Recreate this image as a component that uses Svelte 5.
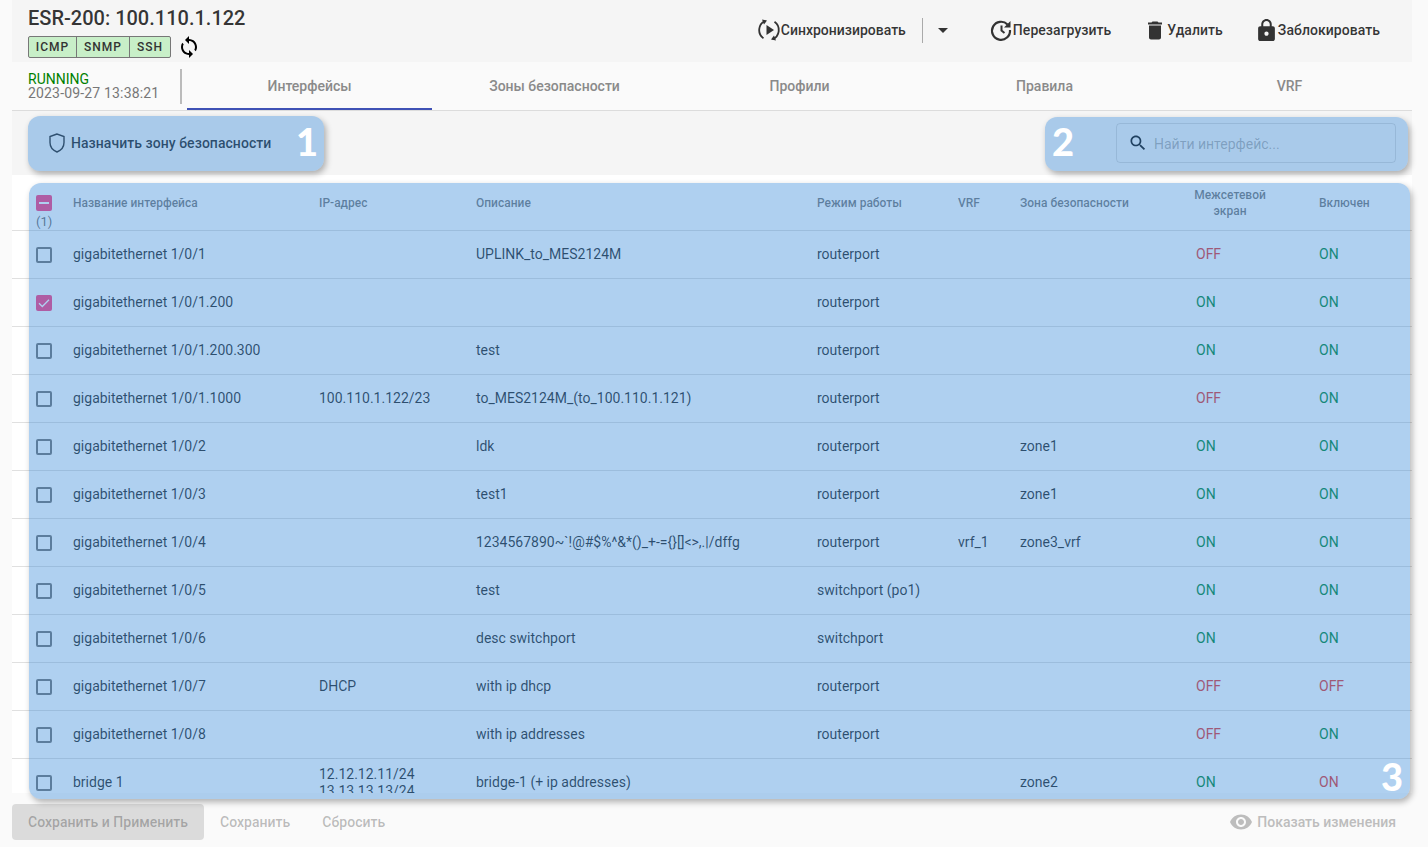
<script>
  const rows = [
    { name: 'gigabitethernet 1/0/1', ip: '', desc: 'UPLINK_to_MES2124M', mode: 'routerport', vrf: '', zone: '', fw: 'OFF', en: 'ON' },
    { name: 'gigabitethernet 1/0/1.200', ip: '', desc: '', mode: 'routerport', vrf: '', zone: '', fw: 'ON', en: 'ON', checked: true },
    { name: 'gigabitethernet 1/0/1.200.300', ip: '', desc: 'test', mode: 'routerport', vrf: '', zone: '', fw: 'ON', en: 'ON' },
    { name: 'gigabitethernet 1/0/1.1000', ip: '100.110.1.122/23', desc: 'to_MES2124M_(to_100.110.1.121)', mode: 'routerport', vrf: '', zone: '', fw: 'OFF', en: 'ON' },
    { name: 'gigabitethernet 1/0/2', ip: '', desc: 'ldk', mode: 'routerport', vrf: '', zone: 'zone1', fw: 'ON', en: 'ON' },
    { name: 'gigabitethernet 1/0/3', ip: '', desc: 'test1', mode: 'routerport', vrf: '', zone: 'zone1', fw: 'ON', en: 'ON' },
    { name: 'gigabitethernet 1/0/4', ip: '', desc: '1234567890~`!@#$%^&*()_+-={}[]<>,.|/dffg', mode: 'routerport', vrf: 'vrf_1', zone: 'zone3_vrf', fw: 'ON', en: 'ON' },
    { name: 'gigabitethernet 1/0/5', ip: '', desc: 'test', mode: 'switchport (po1)', vrf: '', zone: '', fw: 'ON', en: 'ON' },
    { name: 'gigabitethernet 1/0/6', ip: '', desc: 'desc switchport', mode: 'switchport', vrf: '', zone: '', fw: 'ON', en: 'ON' },
    { name: 'gigabitethernet 1/0/7', ip: 'DHCP', desc: 'with ip dhcp', mode: 'routerport', vrf: '', zone: '', fw: 'OFF', en: 'OFF' },
    { name: 'gigabitethernet 1/0/8', ip: '', desc: 'with ip addresses', mode: 'routerport', vrf: '', zone: '', fw: 'OFF', en: 'ON' },
    { name: 'bridge 1', ip: '12.12.12.11/24\n13.13.13.13/24', desc: 'bridge-1 (+ ip addresses)', mode: '', vrf: '', zone: 'zone2', fw: 'ON', en: 'ON', enBad: true }
  ];
  const tabs = ['Интерфейсы', 'Зоны безопасности', 'Профили', 'Правила', 'VRF'];
</script>

<div class="page">
  <header class="header">
    <div class="identity">
      <h1>ESR-200: 100.110.1.122</h1>
      <div class="badge-line">
        <div class="badges"><span class="b1">ICMP</span><span class="b2">SNMP</span><span class="b3">SSH</span></div>
        <svg class="refresh" viewBox="0 0 24 24" width="24" height="24"><path d="M12 4V1L8 5l4 4V6c3.31 0 6 2.69 6 6 0 1.01-.25 1.97-.7 2.8l1.46 1.46C19.54 15.03 20 13.57 20 12c0-4.42-3.58-8-8-8zm0 14c-3.31 0-6-2.69-6-6 0-1.01.25-1.97.7-2.8L5.24 7.74C4.46 8.97 4 10.43 4 12c0 4.42 3.58 8 8 8v3l4-4-4-4v3z"/></svg>
      </div>
    </div>
    <div class="actions">
      <div class="action a-sync">
        <svg viewBox="0 0 24 24" width="24" height="24" fill="none" stroke="#333" stroke-width="1.800">
          <path d="M8.500 2.800A10 10 0 0 0 6.500 20.300"/><path d="M15.500 21.200A10 10 0 0 0 17.500 3.700"/>
          <path d="M5 1.500 10 2.500 7 6.500z" fill="#333" stroke="none"/><path d="M19 22.500 14 21.500 17 17.500z" fill="#333" stroke="none"/>
          <path d="M9.500 7v10l7.500-5z" fill="#333" stroke="none"/>
        </svg>
        <span>Синхронизировать</span>
      </div>
      <i class="sep"></i>
      <i class="caret"></i>
      <div class="action a-restart">
        <svg viewBox="0 0 24 24" width="24" height="24" fill="none" stroke="#333" stroke-width="2.200">
          <path d="M18.500 6.500A9 9 0 1 0 21 12"/><path d="M21.500 3v6.500H15z" fill="#333" stroke="none"/>
          <path d="M12.500 7.500v5l3 2.500" stroke-width="2"/>
        </svg>
        <span>Перезагрузить</span>
      </div>
      <div class="action a-delete">
        <svg viewBox="4 2 16 20" width="16" height="21"><path fill="#333" d="M6 19c0 1.100.9 2 2 2h8c1.100 0 2-.9 2-2V7H6v12zM19 4h-3.500l-1-1h-5l-1 1H5v2h14V4z"/></svg>
        <span>Удалить</span>
      </div>
      <div class="action a-lock">
        <svg viewBox="4 1 16 21" width="17" height="22"><path fill="#333" d="M18 8h-1V6c0-2.760-2.240-5-5-5S7 3.240 7 6v2H6c-1.100 0-2 .9-2 2v10c0 1.100.9 2 2 2h12c1.100 0 2-.9 2-2V10c0-1.100-.9-2-2-2zm-6 9c-1.100 0-2-.9-2-2s.9-2 2-2 2 .9 2 2-.9 2-2 2zm3.100-9H8.900V6c0-1.710 1.390-3.100 3.100-3.100 1.710 0 3.100 1.390 3.100 3.100v2z"/></svg>
        <span>Заблокировать</span>
      </div>
    </div>
  </header>

  <div class="tabbar">
    <div class="status">
      <div class="running">RUNNING</div>
      <div class="date">2023-09-27 13:38:21</div>
    </div>
    <nav class="tabs">
      {#each tabs as t, i}
        <div class="tab" class:active={i === 0}>{t}</div>
      {/each}
    </nav>
  </div>

  <div class="toolbar">
    <div class="assign">
      <svg viewBox="0 0 20 22" width="20" height="22" fill="none" stroke="#2b2b2b" stroke-width="1.400"><path d="M10 2 3 4.600v6c0 4.400 3 7.800 7 9.400 4-1.600 7-5 7-9.400v-6z"/></svg>
      <span>Назначить зону безопасности</span>
    </div>
    <div class="search">
      <svg viewBox="0 0 24 24" width="20" height="20"><path fill="#111" d="M15.500 14h-.79l-.28-.27C15.410 12.590 16 11.110 16 9.500 16 5.910 13.090 3 9.500 3S3 5.910 3 9.500 5.910 16 9.500 16c1.610 0 3.090-.59 4.230-1.570l.27.28v.79l5 4.990L20.490 19l-4.990-5zm-6 0C7.010 14 5 11.990 5 9.500S7.010 5 9.500 5 14 7.010 14 9.500 11.990 14 9.500 14z"/></svg>
      <span class="placeholder">Найти интерфейс...</span>
    </div>
    <div class="hl hl-1"><b>1</b></div>
    <div class="hl hl-2"><b>2</b></div>
  </div>

  <section class="table">
    <div class="row head">
      <div class="check-col">
        <span class="box on"><i class="minus"></i></span>
        <span class="count">(1)</span>
      </div>
      <div class="hcell">Название интерфейса</div>
      <div class="hcell">IP-адрес</div>
      <div class="hcell">Описание</div>
      <div class="hcell">Режим работы</div>
      <div class="hcell">VRF</div>
      <div class="hcell">Зона безопасности</div>
      <div class="hcell fw-head">Межсетевой экран</div>
      <div class="hcell">Включен</div>
    </div>
    {#each rows as r}
      <div class="row body">
        <div class="cb-cell">
          {#if r.checked}
            <span class="box on"><svg viewBox="0 0 16 16" width="16" height="16" fill="none" stroke="#fff" stroke-width="1.300"><path d="M3 8.300 6.300 11.500 13 4.800"/></svg></span>
          {:else}
            <span class="box"></span>
          {/if}
        </div>
        <div>{r.name}</div>
        <div class="ip">{r.ip}</div>
        <div>{r.desc}</div>
        <div>{r.mode}</div>
        <div>{r.vrf}</div>
        <div>{r.zone}</div>
        <div class="flag fw" class:off={r.fw === 'OFF'}>{r.fw}</div>
        <div class="flag" class:off={r.en === 'OFF' || r.enBad}>{r.en}</div>
      </div>
    {/each}
  </section>

  <footer class="footer">
    <div class="btn primary">Сохранить и Применить</div>
    <div class="btn">Сохранить</div>
    <div class="btn">Сбросить</div>
    <div class="show">
      <svg viewBox="0 0 24 24" width="24" height="24"><path fill="#bdbdbd" d="M12 4.500C7 4.500 2.730 7.610 1 12c1.730 4.390 6 7.500 11 7.500s9.270-3.110 11-7.500c-1.730-4.390-6-7.500-11-7.500zM12 17c-2.760 0-5-2.240-5-5s2.240-5 5-5 5 2.240 5 5-2.240 5-5 5zm0-8c-1.660 0-3 1.340-3 3s1.340 3 3 3 3-1.340 3-3-1.340-3-3-3z"/></svg>
      <span>Показать изменения</span>
    </div>
  </footer>

  <div class="hl hl-3"><b>3</b></div>
</div>

<style>
  :global(body) { margin: 0; background: #fafafa; }
  .page {
    position: relative;
    width: 1428px;
    height: 847px;
    overflow: hidden;
    box-sizing: border-box;
    padding: 0 16px 0 12px;
    display: flex;
    flex-direction: column;
    font-family: Roboto, sans-serif;
    font-size: 14px;
    color: rgba(0, 0, 0, 0.87);
    background: #fafafa;
  }

  .header {
    height: 62px;
    flex: none;
    background: #f5f5f5;
    display: flex;
    justify-content: space-between;
    box-sizing: border-box;
    padding: 6px 32px 0 16px;
  }
  h1 { margin: 0; font-size: 20px; font-weight: 500; line-height: 24px; color: rgba(0, 0, 0, 0.8); }
  .badge-line { display: flex; align-items: center; margin-top: 5px; }
  .badges { display: flex; height: 22px; box-sizing: border-box; border: 1px solid #777; border-radius: 2px; background: #c8efc8; }
  .badges span { display: flex; align-items: center; justify-content: center; font-size: 12px; font-weight: 500; letter-spacing: 1px; color: #333; box-sizing: border-box; }
  .b1 { width: 47px; }
  .b2 { width: 53px; border-left: 1px solid #777; }
  .b3 { width: 41px; border-left: 1px solid #777; }
  .refresh { margin-left: 6px; }

  .actions { display: flex; align-items: center; height: 48px; }
  .action { display: flex; align-items: center; font-weight: 500; letter-spacing: 0.05px; color: rgba(0, 0, 0, 0.8); }
  .a-sync { letter-spacing: 0; }
  .a-sync svg, .a-restart svg { width: 24px; height: 24px; margin-right: 0; }
  .sep { width: 1px; height: 25px; background: #aaa; margin-left: 16px; }
  .caret { width: 0; height: 0; border: 5px solid transparent; border-top-color: #333; border-bottom: 0; margin-left: 15px; }
  .a-restart { margin-left: 41px; }
  .a-delete { margin-left: 36px; }
  .a-delete svg { margin-right: 4px; }
  .a-lock { margin-left: 35px; }
  .a-lock svg { margin-right: 3px; }

  .tabbar {
    height: 49px;
    flex: none;
    display: flex;
    box-sizing: border-box;
    border-bottom: 1px solid #dcdcdc;
    background: #fafafa;
  }
  .status {
    width: 175px;
    flex: none;
    position: relative;
    box-sizing: border-box;
    padding: 10px 0 0 16px;
    line-height: 14px;
  }
  .status::after { content: ''; position: absolute; left: 168px; top: 7px; width: 2px; height: 35px; background: #bbb; }
  .running { color: #008000; }
  .date { color: #777; letter-spacing: 0.17px; }
  .tabs { flex: 1; display: grid; grid-template-columns: repeat(5, 1fr); }
  .tab { display: flex; align-items: center; justify-content: center; font-weight: 500; color: #8a8a8a; box-sizing: border-box; height: 48px; }
  .tab.active { border-bottom: 2px solid #3f51b5; padding-top: 2px; }

  .toolbar {
    position: relative;
    height: 64px;
    flex: none;
    background: #f5f5f5;
    display: flex;
    justify-content: space-between;
    align-items: center;
  }
  .assign { display: flex; align-items: center; font-weight: 500; letter-spacing: 0.05px; padding-left: 35px; gap: 4px; color: rgba(0, 0, 0, 0.85); }
  .search {
    width: 280px;
    height: 40px;
    box-sizing: border-box;
    margin-right: 16px;
    display: flex;
    align-items: center;
    border: 1px solid rgba(0, 0, 0, 0.12);
    border-radius: 4px;
    padding-left: 11px;
    gap: 6px;
    color: rgba(0, 0, 0, 0.3);
  }
  .placeholder { margin-top: 2px; }

  .table { height: 618px; flex: none; overflow: hidden; background: #fff; padding-top: 8px; box-sizing: border-box; }
  .row {
    display: grid;
    grid-template-columns: 61px 246px 157px 341px 141px 62px 174px 125px 93px;
    height: 48px;
    box-sizing: border-box;
    border-bottom: 1px solid #e0e0e0;
    align-items: center;
    color: rgba(0, 0, 0, 0.85);
  }
  .body { padding-bottom: 2px; }
  .row > :first-child { padding-left: 24px; box-sizing: border-box; }
  .head { font-size: 12px; font-weight: 500; color: rgba(0, 0, 0, 0.54); }
  .hcell { margin-bottom: 8px; }
  .check-col { align-self: start; padding-top: 12px; display: flex; flex-direction: column; align-items: flex-start; }
  .count { line-height: 14px; margin-top: 4px; font-size: 13px; color: rgba(0, 0, 0, 0.6); font-weight: 400; }
  .fw-head { width: 72px; text-align: center; line-height: 16px; margin-top: 1px; }
  .cb-cell { display: flex; align-items: center; padding-top: 3px; }
  .box {
    display: flex;
    align-items: center;
    justify-content: center;
    width: 16px;
    height: 16px;
    box-sizing: border-box;
    border: 2px solid rgba(0, 0, 0, 0.54);
    border-radius: 2px;
  }
  .box.on { border: 0; background: #ff4081; }
  .minus { width: 10px; height: 2px; background: #fff; }
  .ip { white-space: pre-line; line-height: 17px; margin-top: 2px; color: rgba(0, 0, 0, 0.85); }
  .flag { color: #00883a; }
  .flag.off { color: #e53935; }
  .fw { padding-left: 2px; }

  .footer { flex: 1; display: flex; align-items: center; padding-top: 4px; font-weight: 500; letter-spacing: 0.025px; color: rgba(0, 0, 0, 0.26); }
  .btn { height: 36px; line-height: 36px; padding: 0 16px; border-radius: 4px; }
  .primary { background: rgba(0, 0, 0, 0.12); }
  .show { margin-left: auto; display: flex; align-items: center; gap: 4px; padding-right: 16px; color: #bdbdbd; }

  .hl {
    position: absolute;
    box-sizing: border-box;
    background: rgba(55, 137, 217, 0.4);
    border-radius: 12px;
    box-shadow: 2px 3px 6px rgba(0, 0, 0, 0.3);
    pointer-events: none;
  }
  .hl b { position: absolute; font-family: Lato, sans-serif; font-weight: 900; font-size: 38px; line-height: 38px; color: #fff; }
  .hl-1 { left: 16px; top: 5px; width: 296px; height: 55px; }
  .hl-1 b { right: 6px; top: 6px; }
  .hl-2 { left: 1033px; top: 6px; width: 363px; height: 54px; }
  .hl-2 b { left: 7px; top: 5px; }
  .hl-3 { left: 29px; top: 183px; width: 1381px; height: 616px; }
  .hl-3 b { right: 7px; bottom: 4px; }
</style>
